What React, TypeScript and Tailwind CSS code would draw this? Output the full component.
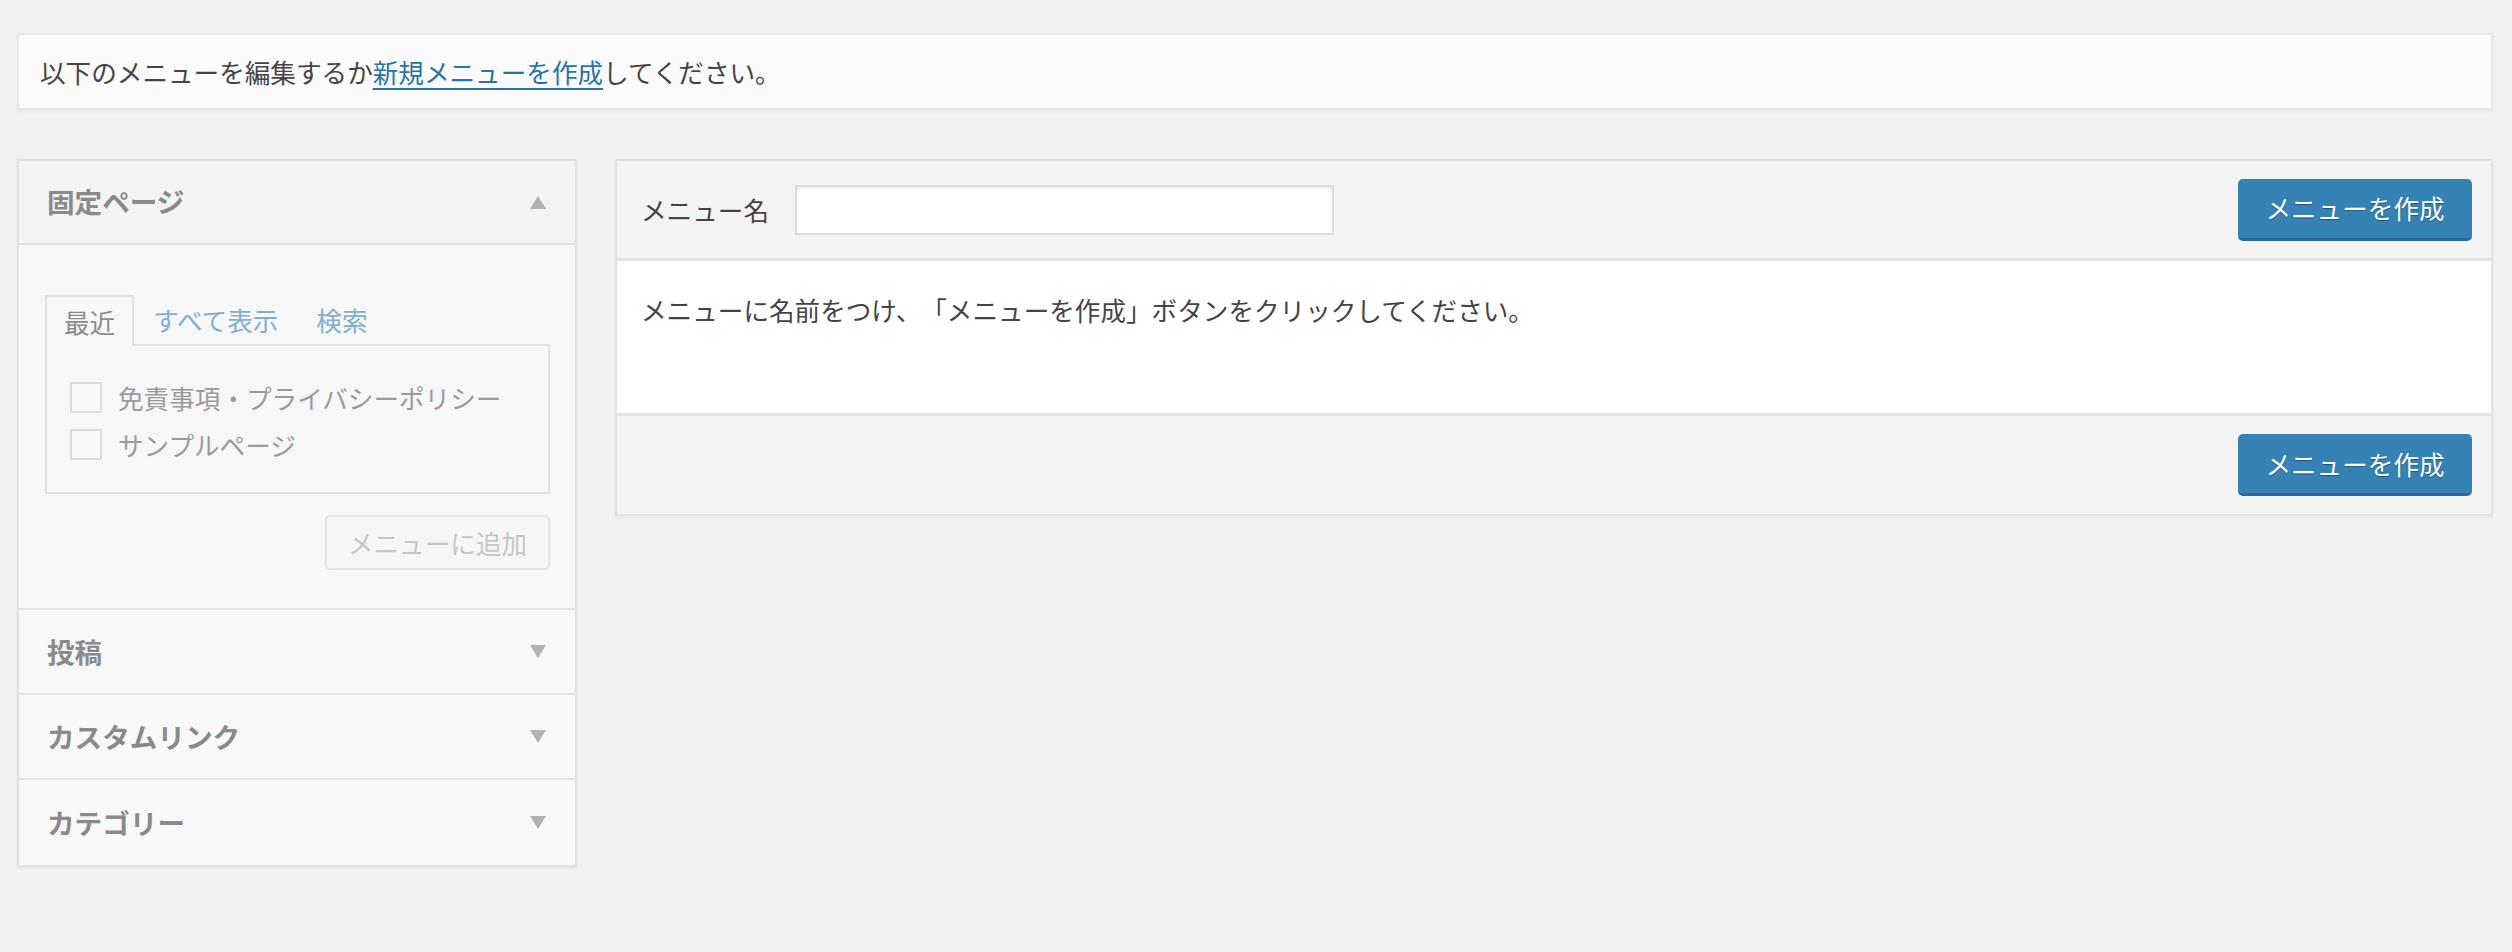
import React from "react";

const font = { fontFamily: '"Noto Sans CJK JP", "Noto Sans", sans-serif' };

function Caret({ up }: { up?: boolean }) {
  return (
    <svg width="16" height="13" viewBox="0 0 16 13" className="shrink-0">
      <polygon
        points={up ? "8,0 16,13 0,13" : "0,0 16,0 8,13"}
        fill="#b2b2b2"
      />
    </svg>
  );
}

function PrimaryButton({ label }: { label: string }) {
  return (
    <button className="flex h-[62px] w-[234px] items-center justify-center rounded-[5px] border-b-[3px] border-[#2a6797] bg-[#3582b4] text-[25.6px] leading-none text-white [text-shadow:0_1px_1px_rgba(0,0,0,0.35)]">
      {label}
    </button>
  );
}

function CollapsedSection({ title, last }: { title: string; last?: boolean }) {
  return (
    <div
      className={
        "flex h-[85px] items-center justify-between bg-[#f8f8f8] pl-[28px] pr-[29px] " +
        (last ? "" : "border-b-2 border-[#e2e2e2]")
      }
    >
      <h3 className="text-[27.6px] font-bold leading-none text-[#8a8a8a]">{title}</h3>
      <Caret />
    </div>
  );
}

function Checkbox({ label }: { label: string }) {
  return (
    <label className="flex items-center gap-[16px]">
      <span className="block h-[31px] w-[32px] border-2 border-[#dcdcdc] bg-[#f8f8f8]" />
      <span className="text-[25.6px] leading-none text-[#9a9a9a]">{label}</span>
    </label>
  );
}

function LeftPanel() {
  return (
    <div className="w-[560px] shrink-0 border-2 border-[#e2e2e2] shadow-[0_2px_2px_rgba(0,0,0,0.05)]">
      <div className="flex h-[84px] items-center justify-between border-b-2 border-[#e2e2e2] bg-[#f3f3f3] pl-[28px] pr-[29px]">
        <h3 className="text-[27.6px] font-bold leading-none text-[#8a8a8a]">固定ページ</h3>
        <Caret up />
      </div>
      <div className="border-b-2 border-[#e2e2e2] bg-[#f7f7f7] pb-[38px] pl-[26px] pr-[25px] pt-[50px]">
        <div className="flex h-[49px] items-stretch">
          <div className="relative z-10 -mb-[2px] flex items-center border-x-2 border-t-2 border-[#e2e2e2] bg-[#f7f7f7] px-[17px] text-[25.6px] leading-none text-[#8a8a8a]">
            最近
          </div>
          <div className="flex items-center px-[19px] text-[25.6px] leading-none text-[#80aed0]">
            すべて表示
          </div>
          <div className="flex items-center px-[19px] text-[25.6px] leading-none text-[#80aed0]">
            検索
          </div>
        </div>
        <div className="flex h-[150px] flex-col gap-[16px] border-2 border-[#e2e2e2] pl-[23px] pt-[36px]">
          <Checkbox label="免責事項・プライバシーポリシー" />
          <Checkbox label="サンプルページ" />
        </div>
        <div className="mt-[21px] flex justify-end">
          <button className="flex h-[55px] w-[225px] items-center justify-center rounded-[5px] border-2 border-[#e4e4e4] bg-[#f6f6f6] text-[25.6px] leading-none text-[#c6c6c6]">
            メニューに追加
          </button>
        </div>
      </div>
      <CollapsedSection title="投稿" />
      <CollapsedSection title="カスタムリンク" />
      <CollapsedSection title="カテゴリー" last />
    </div>
  );
}

function MainPanel() {
  return (
    <div className="flex-1 self-start border-2 border-[#e2e2e2] shadow-[0_2px_2px_rgba(0,0,0,0.05)]">
      <div className="flex h-[100px] items-center justify-between border-b-[3px] border-[#e2e2e2] bg-[#f4f4f4] pl-[24px] pr-[19px]">
        <div className="flex items-center gap-[26px]">
          <label className="text-[25.6px] leading-none text-[#444]">メニュー名</label>
          <input
            type="text"
            className="h-[50px] w-[539px] border-2 border-[#dddddd] bg-white shadow-[inset_0_2px_3px_rgba(0,0,0,0.07)] outline-none"
          />
        </div>
        <PrimaryButton label="メニューを作成" />
      </div>
      <div className="h-[152px] bg-white pl-[24px] pt-[30px]">
        <p className="text-[25.6px] leading-[38px] text-[#444]">
          メニューに名前をつけ、「メニューを作成」ボタンをクリックしてください。
        </p>
      </div>
      <div className="flex h-[101px] items-center justify-end border-t-[3px] border-[#e2e2e2] bg-[#f4f4f4] pr-[19px]">
        <PrimaryButton label="メニューを作成" />
      </div>
    </div>
  );
}

export default function App() {
  return (
    <div
      style={font}
      className="min-h-screen bg-[#f1f1f1] pl-[17px] pr-[19px] pt-[33px] [text-spacing-trim:space-all]"
    >
      <div className="flex h-[77px] items-center border-2 border-[#e8e8e8] bg-[#fbfbfb] pl-[21px] shadow-[0_2px_2px_rgba(0,0,0,0.04)]">
        <p className="text-[25.6px] leading-none text-[#444]">
          以下のメニューを編集するか
          <a href="#" className="text-[#2873a8] underline underline-offset-[5px]">
            新規メニューを作成
          </a>
          してください。
        </p>
      </div>
      <div className="mt-[49px] flex items-start gap-[38px]">
        <LeftPanel />
        <MainPanel />
      </div>
    </div>
  );
}
